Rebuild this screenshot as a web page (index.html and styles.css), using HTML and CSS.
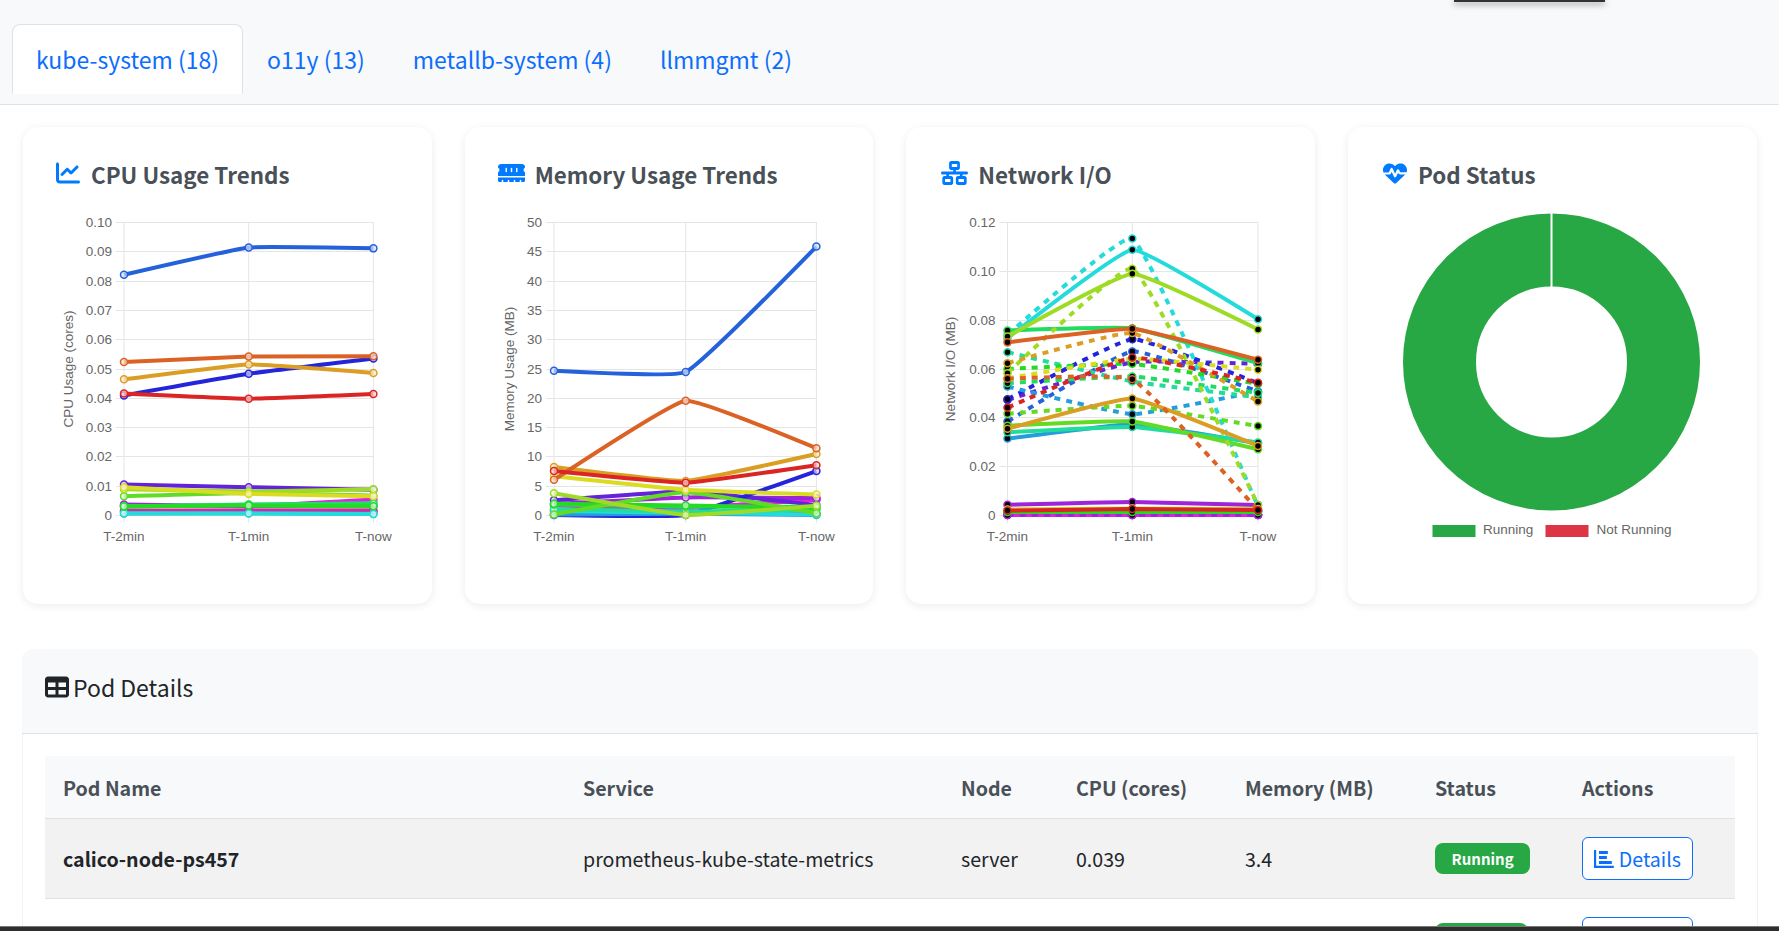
FILE: index.html
```html
<!DOCTYPE html>
<html>
<head>
    <title>Pod Dashboard</title>
    <link rel="stylesheet" href="styles.css">
</head>
<body>
    <div class="top-handle"></div>

    <ul class="tabs">
        <li class="tab active">kube-system (18)</li>
        <li class="tab">o11y (13)</li>
        <li class="tab">metallb-system (4)</li>
        <li class="tab">llmmgmt (2)</li>
    </ul>

    <div class="charts">
        <div class="chart-card">
            <h5 class="chart-title">
                <svg class="icon" viewBox="0 0 512 512"><path d="M64 64c0-17.7-14.3-32-32-32S0 46.3 0 64V400c0 44.2 35.8 80 80 80H480c17.7 0 32-14.3 32-32s-14.3-32-32-32H80c-8.8 0-16-7.2-16-16V64zm406.6 86.6c12.5-12.5 12.5-32.8 0-45.3s-32.8-12.5-45.3 0L320 210.7l-57.4-57.4c-12.5-12.5-32.8-12.5-45.3 0l-112 112c-12.5 12.5-12.5 32.8 0 45.3s32.8 12.5 45.3 0L240 221.3l57.4 57.4c12.5 12.5 32.8 12.5 45.3 0l128-128z"/></svg>
                CPU Usage Trends
            </h5>
            <svg class="chart" id="cpuChart" viewBox="0 0 408 370"></svg>
        </div>
        <div class="chart-card">
            <h5 class="chart-title">
                <svg class="icon wide" viewBox="0 0 576 512"><path d="M64 64C28.7 64 0 92.7 0 128v7.4c0 6.8 4.4 12.6 10.1 16.3C23.3 160.3 32 175.1 32 192s-8.7 31.7-21.9 40.3C4.4 236 0 241.8 0 248.6V320H576V248.6c0-6.8-4.4-12.6-10.1-16.3C552.7 223.7 544 208.9 544 192s8.7-31.7 21.9-40.3c5.7-3.7 10.1-9.5 10.1-16.3V128c0-35.3-28.7-64-64-64H64zM576 352H0v64c0 17.7 14.3 32 32 32H80V416c0-8.8 7.2-16 16-16s16 7.2 16 16v32h96V416c0-8.8 7.2-16 16-16s16 7.2 16 16v32h96V416c0-8.8 7.2-16 16-16s16 7.2 16 16v32h96V416c0-8.8 7.2-16 16-16s16 7.2 16 16v32h48c17.7 0 32-14.3 32-32V352zM192 160v64c0 8.8-7.2 16-16 16s-16-7.2-16-16V160c0-8.8 7.2-16 16-16s16 7.2 16 16zm112 0v64c0 8.8-7.2 16-16 16s-16-7.2-16-16V160c0-8.8 7.2-16 16-16s16 7.2 16 16zm112 0v64c0 8.8-7.2 16-16 16s-16-7.2-16-16V160c0-8.8 7.2-16 16-16s16 7.2 16 16z"/></svg>
                Memory Usage Trends
            </h5>
            <svg class="chart" id="memChart" viewBox="0 0 408 370"></svg>
        </div>
        <div class="chart-card inset">
            <h5 class="chart-title">
                <svg class="icon wide" viewBox="0 0 640 512" preserveAspectRatio="none"><path d="M256 64H384v64H256V64zM240 0c-26.5 0-48 21.5-48 48v96c0 26.5 21.5 48 48 48h48v32H32c-17.7 0-32 14.3-32 32s14.3 32 32 32h96v32H80c-26.5 0-48 21.5-48 48v96c0 26.5 21.5 48 48 48H240c26.5 0 48-21.5 48-48V368c0-26.5-21.5-48-48-48H192V288H448v32H400c-26.5 0-48 21.5-48 48v96c0 26.5 21.5 48 48 48H560c26.5 0 48-21.5 48-48V368c0-26.5-21.5-48-48-48H512V288h96c17.7 0 32-14.3 32-32s-14.3-32-32-32H352V192h48c26.5 0 48-21.5 48-48V48c0-26.5-21.5-48-48-48H240zM96 448V384H224v64H96zm320-64H544v64H416V384z"/></svg>
                Network I/O
            </h5>
            <svg class="chart" id="netChart" viewBox="0 0 408 370"></svg>
        </div>
        <div class="chart-card inset">
            <h5 class="chart-title">
                <svg class="icon" viewBox="0 0 512 512"><path d="M228.3 469.1L47.6 300.4c-4.2-3.9-8.2-8.1-11.9-12.4h87c22.6 0 43-13.6 51.7-34.5l10.5-25.2 49.3 109.5c3.8 8.5 12.1 14 21.4 14.1s17.8-5 22-13.3L320 253.7l1.7 3.4c9.5 19 28.9 31 50.1 31H476.3c-3.7 4.3-7.7 8.5-11.9 12.4L283.7 469.1c-7.5 7-17.4 10.9-27.7 10.9s-20.2-3.9-27.7-10.9zM503.7 240h-132c-3 0-5.8-1.7-7.2-4.4l-23.2-46.3c-4.1-8.1-12.4-13.3-21.5-13.3s-17.4 5.1-21.5 13.3l-41.4 82.8L205.9 158.2c-3.9-8.7-12.7-14.3-22.2-14.1s-18.1 5.9-21.8 14.8l-31.8 76.3c-2.5 6-8.3 9.8-14.8 9.8H8.3C2.9 225.9 0 211.3 0 196.3v-5.6c0-68.1 49.2-126.2 116.4-137.4c44.4-7.4 89.5 7.1 121.3 38.9L256 110.6l18.3-18.3c31.8-31.8 76.9-46.3 121.3-38.9C462.8 64.5 512 122.6 512 190.7v5.6c0 15-2.9 29.6-8.3 43.7z"/></svg>
                Pod Status
            </h5>
            <svg class="chart" viewBox="0 0 408 370">
                <circle cx="203.5" cy="152" r="112" class="donut-ring"/>
                <rect x="202.5" y="2" width="2" height="75" class="donut-gap"/>
                <rect x="84.5" y="315" width="43" height="12" class="legend-running"/>
                <text x="135" y="324" class="legend-text">Running</text>
                <rect x="197.5" y="315" width="43" height="12" class="legend-not"/>
                <text x="248.5" y="324" class="legend-text">Not Running</text>
            </svg>
        </div>
    </div>

    <div class="details-card">
        <div class="details-header">
            <svg class="table-icon" viewBox="0 0 512 512"><path d="M64 256V160H224v96H64zm0 64H224v96H64V320zm224 96V320H448v96H288zM448 256H288V160H448v96zM64 32C28.7 32 0 60.7 0 96V416c0 35.3 28.7 64 64 64H448c35.3 0 64-28.7 64-64V96c0-35.3-28.7-64-64-64H64z"/></svg>
            Pod Details
        </div>
        <div class="details-body">
            <table>
                <thead>
                    <tr>
                        <th class="col-name">Pod Name</th>
                        <th class="col-service">Service</th>
                        <th class="col-node">Node</th>
                        <th class="col-cpu">CPU (cores)</th>
                        <th class="col-mem">Memory (MB)</th>
                        <th class="col-status">Status</th>
                        <th>Actions</th>
                    </tr>
                </thead>
                <tbody>
                    <tr class="striped">
                        <td><strong>calico-node-ps457</strong></td>
                        <td>prometheus-kube-state-metrics</td>
                        <td>server</td>
                        <td>0.039</td>
                        <td>3.4</td>
                        <td><span class="badge">Running</span></td>
                        <td>
                            <button class="details-btn">
                                <svg class="btn-icon" viewBox="0 0 20 18"><path d="M0 0h2.2v15.8H20V18H0z"/><path d="M5 1h9v3H5zM5 6h8v3H5zM5 11h13v3H5z"/></svg>
                                Details
                            </button>
                        </td>
                    </tr>
                    <tr>
                        <td></td>
                        <td></td>
                        <td></td>
                        <td></td>
                        <td></td>
                        <td><span class="badge empty"></span></td>
                        <td><button class="details-btn"></button></td>
                    </tr>
                </tbody>
            </table>
        </div>
    </div>

    <div class="bottom-bar"></div>

    <script src="charts.js"></script>
</body>
</html>
```

FILE: styles.css
```css
html, body {
    height: 931px;
    overflow: hidden;
}
body {
    font-family: "Noto Sans CJK SC", "Noto Sans", sans-serif;
    background-color: #fff;
    color: #212529;
    margin: 0;
}
.top-handle {
    position: absolute;
    top: 0;
    left: 1454px;
    width: 151px;
    height: 2px;
    background: #333;
    box-shadow: 0 2px 6px rgba(0, 0, 0, 0.6);
}
.bottom-bar {
    position: fixed;
    left: 0;
    right: 0;
    bottom: 0;
    height: 4px;
    background: #2e2e2e;
    border-top: 1px solid #777;
}
.tabs {
    display: flex;
    list-style: none;
    margin: 0;
    padding: 24px 0 10px 12px;
    height: 70px;
    background: #f8f9fa;
    border-bottom: 1px solid #dee2e6;
}
.tab {
    padding: 0 23px;
    line-height: 68px;
    font-size: 23px;
    color: #0d6efd;
    border: 1px solid transparent;
}
.tab.active {
    background: #fff;
    border-color: #dee2e6;
    border-bottom-color: #fff;
    border-radius: 8px 8px 0 0;
}
.charts {
    display: grid;
    grid-template-columns: repeat(4, 1fr);
    gap: 33px;
    margin: 22px 22.5px 0 23px;
}
.chart-card {
    height: 477px;
    box-sizing: border-box;
    padding-top: 31px;
    border-radius: 15px;
    background: #fff;
    box-shadow: 0 2px 8px rgba(0, 0, 0, 0.08);
}
.chart-title {
    display: flex;
    align-items: center;
    margin: 0 0 20px 33px;
    height: 32px;
    font-size: 22.4px;
    font-weight: 600;
    color: #495057;
}
.inset .chart-title {
    margin-left: 35px;
}
.icon {
    width: 24px;
    height: 24px;
    margin-right: 11px;
    fill: #007bff;
    position: relative;
    top: -1px;
}
.icon.wide {
    width: 27px;
    margin-right: 10px;
}
.chart {
    display: block;
    width: 408px;
    height: 370px;
}
.donut-ring {
    fill: none;
    stroke: #28a745;
    stroke-width: 73px;
}
.donut-gap {
    fill: #fff;
}
.legend-running {
    fill: #28a745;
}
.legend-not {
    fill: #dc3545;
}
.legend-text,
.tick,
.axis-title {
    font-family: "Liberation Sans", Arial, sans-serif;
    font-size: 13.5px;
    fill: #666;
}
.grid {
    stroke: #e5e5e5;
    stroke-width: 1;
}
.details-card {
    margin: 45px 21px 0 22px;
    height: 282px;
    overflow: hidden;
    border-radius: 12px 12px 0 0;
    box-shadow: inset 1px 0 0 #f1f1f1, inset -1px 0 0 #f1f1f1;
}
.details-header {
    display: flex;
    align-items: center;
    height: 76px;
    padding: 0 0 8px 23px;
    font-size: 23px;
    line-height: 32px;
    background: #f8f9fa;
    border-bottom: 1px solid #dee2e6;
    border-radius: 12px 12px 0 0;
}
.table-icon {
    width: 24px;
    height: 24px;
    margin-right: 4px;
    fill: #212529;
}
.details-body {
    padding: 22px 23px;
}
table {
    width: 100%;
    border-collapse: collapse;
    table-layout: fixed;
    font-size: 19.6px;
    line-height: 26px;
}
th, td {
    padding: 18px;
    text-align: left;
    border-bottom: 1px solid #dee2e6;
}
th {
    padding: 19px 18px 17px;
    background-color: #f8f9fa;
    color: #495057;
    font-weight: 600;
    height: 26px;
}
.col-name { width: 484px; }
.col-service { width: 342px; }
.col-node { width: 79px; }
.col-cpu { width: 133px; }
.col-mem { width: 154px; }
.col-status { width: 111px; }
.striped {
    background-color: #f2f2f2;
}
.badge {
    display: inline-block;
    padding: 0 16.5px;
    line-height: 31px;
    font-size: 15px;
    font-weight: 600;
    color: #fff;
    background: #28a745;
    border-radius: 8px;
    vertical-align: middle;
}
.badge.empty {
    width: 60px;
    height: 31px;
}
.details-btn {
    display: flex;
    align-items: center;
    width: 111px;
    height: 43px;
    padding: 0 11px;
    font-family: inherit;
    font-size: 19.6px;
    color: #0d6efd;
    background: #fff;
    border: 1px solid #0d6efd;
    border-radius: 6px;
}
.btn-icon {
    width: 20px;
    height: 18px;
    margin-right: 5px;
    fill: #0d6efd;
}
```

FILE: charts.js
```js
// values per pod: hue index i -> color hsl(i * 20, 72%, 50%)
const labels = ["T-2min", "T-1min", "T-now"];
const NS = "http://www.w3.org/2000/svg";

const cpuData = [
    [.0415, .0397, .0413], [.0522, .0541, .0542], [.0463, .0514, .0485],
    [.0095, .0072, .0064], [.0088, .0080, .0088], [.0064, .0075, .0066],
    [.0030, .0032, .0030], [.0028, .0036, .0038], [.0030, .0035, .0040],
    [.0006, .0005, .0003], [.0005, .0006, .0004], [.0820, .0913, .0910],
    [.0408, .0482, .0534], [.0104, .0095, .0086], [.0036, .0030, .0030],
    [.0032, .0030, .0053], [.0015, .0015, .0015], [.0012, .0012, .0012]
];
const memData = [
    [7.5, 5.5, 8.5], [6, 19.5, 11.4], [8.2, 5.8, 10.4],
    [6.6, 4.3, 3.5], [3.7, 0, 1.6], [.1, 3.9, .3],
    [1.9, 1.6, 1.2], [1.8, 1.4, 1.4], [1, .6, .9],
    [.7, .4, .1], [.1, .2, 0], [24.6, 24.4, 45.8],
    [0, 0, 7.5], [2.5, 4, 1.7], [1.9, 3, 2.9],
    [.8, 1.2, 2.6], [1.6, 1.2, 2.7], [.2, .4, .2]
];
// rx is solid, tx is dashed
const netRx = [
    [.0018, .0025, .0020], [.0707, .0763, .0636], [.0353, .0477, .0283],
    [.0023, .0027, .0025], [.0731, .0988, .0760], [.0366, .0383, .0269],
    [.0012, .0012, .0012], [.0756, .0765, .0622], [.0339, .0360, .0297],
    [.0724, .1086, .0802], [.0313, .0372, .0294], [.0015, .0015, .0015],
    [.0015, .0015, .0015], [.0018, .0018, .0018], [.0042, .0053, .0041],
    [0, 0, 0], [.0002, .0002, .0002], [.0001, .0001, .0001]
];
const netTx = [
    [.0440, .0645, .0542], [.0558, .0556, .0020], [.0622, .0745, .0465],
    [.0560, .0640, .0595], [.0581, .1009, .0041], [.0415, .0447, .0364],
    [.0598, .0619, .0537], [.0540, .0567, .0500], [.0667, .0547, .0482],
    [.0738, .1132, .0034], [.0526, .0413, .0506], [.0383, .0670, .0506],
    [.0474, .0720, .0540], [.0471, .0626, .0619], [0, 0, 0],
    [0, 0, 0], [.0001, .0001, .0001], [.0001, .0001, .0001]
];

function el(parent, name, attrs, text) {
    let node = document.createElementNS(NS, name);
    for (let key in attrs) {
        node.setAttribute(key, attrs[key]);
    }
    if (text) node.textContent = text;
    parent.appendChild(node);
    return node;
}

// same spline as the chart library, tension 0.1
function linePath(pts) {
    let [a, b, c] = pts;
    let t = 0.1;
    let d01 = Math.hypot(b.x - a.x, b.y - a.y);
    let d12 = Math.hypot(c.x - b.x, c.y - b.y);
    let s = d01 / (d01 + d12) * t;
    let r = d12 / (d01 + d12) * t;
    let c1 = { x: b.x - s * (c.x - a.x), y: b.y - s * (c.y - a.y) };
    let c2 = { x: b.x + r * (c.x - a.x), y: b.y + r * (c.y - a.y) };
    return `M${a.x} ${a.y}Q${c1.x} ${c1.y} ${b.x} ${b.y}Q${c2.x} ${c2.y} ${c.x} ${c.y}`;
}

function drawChart(id, cfg) {
    let svg = document.getElementById(id);
    let top = 12, bottom = 305;
    let xs = cfg.xs;
    let mapY = v => bottom - (v / cfg.max) * (bottom - top);

    for (let i = 0; i <= cfg.steps; i++) {
        let y = Math.round(top + (bottom - top) * i / cfg.steps) + .5;
        el(svg, "line", { x1: xs[0] - 8, x2: xs[2], y1: y, y2: y, class: "grid" });
        let value = cfg.max * (cfg.steps - i) / cfg.steps;
        let label = i === cfg.steps ? "0" : value.toFixed(cfg.digits);
        el(svg, "text", { x: xs[0] - 12, y: y + 4, "text-anchor": "end", class: "tick" }, label);
    }
    xs.forEach((x, i) => {
        el(svg, "line", { x1: x, x2: x, y1: top, y2: bottom + 8, class: "grid" });
        el(svg, "text", { x: x, y: bottom + 26, "text-anchor": "middle", class: "tick" }, labels[i]);
    });
    let titleY = 159;
    el(svg, "text", {
        x: cfg.titleX, y: titleY, "text-anchor": "middle", class: "axis-title",
        transform: `rotate(-90 ${cfg.titleX} ${titleY})`
    }, cfg.title);

    // first dataset ends up on top
    for (let i = cfg.series.length - 1; i >= 0; i--) {
        let s = cfg.series[i];
        let color = `hsl(${s.hue}, 72%, 50%)`;
        let pts = s.values.map((v, k) => ({ x: xs[k], y: mapY(v) }));
        let attrs = { d: linePath(pts), fill: "none", stroke: color, "stroke-width": 4 };
        if (s.dashed) attrs["stroke-dasharray"] = "6 6";
        el(svg, "path", attrs);
        pts.forEach(p => {
            el(svg, "circle", {
                cx: p.x, cy: p.y, r: 3.5, "stroke-width": 1.5, stroke: color,
                fill: cfg.dots || `hsla(${s.hue}, 72%, 90%, 0.7)`
            });
        });
    }
}

function plain(data) {
    return data.map((values, i) => ({ hue: i * 20, values: values }));
}

drawChart("cpuChart", {
    xs: [101, 225.7, 350.4], max: .1, steps: 10, digits: 2,
    title: "CPU Usage (cores)", titleX: 50, series: plain(cpuData)
});
drawChart("memChart", {
    xs: [89, 220.7, 351.4], max: 50, steps: 10, digits: 0,
    title: "Memory Usage (MB)", titleX: 49, series: plain(memData)
});

let netSeries = [];
netRx.forEach((values, i) => {
    netSeries.push({ hue: i * 20, values: values });
    netSeries.push({ hue: i * 20, values: netTx[i], dashed: true });
});
drawChart("netChart", {
    xs: [101.5, 226.3, 352], max: .12, steps: 6, digits: 2,
    title: "Network I/O (MB)", titleX: 49, series: netSeries, dots: "#000"
});
```
